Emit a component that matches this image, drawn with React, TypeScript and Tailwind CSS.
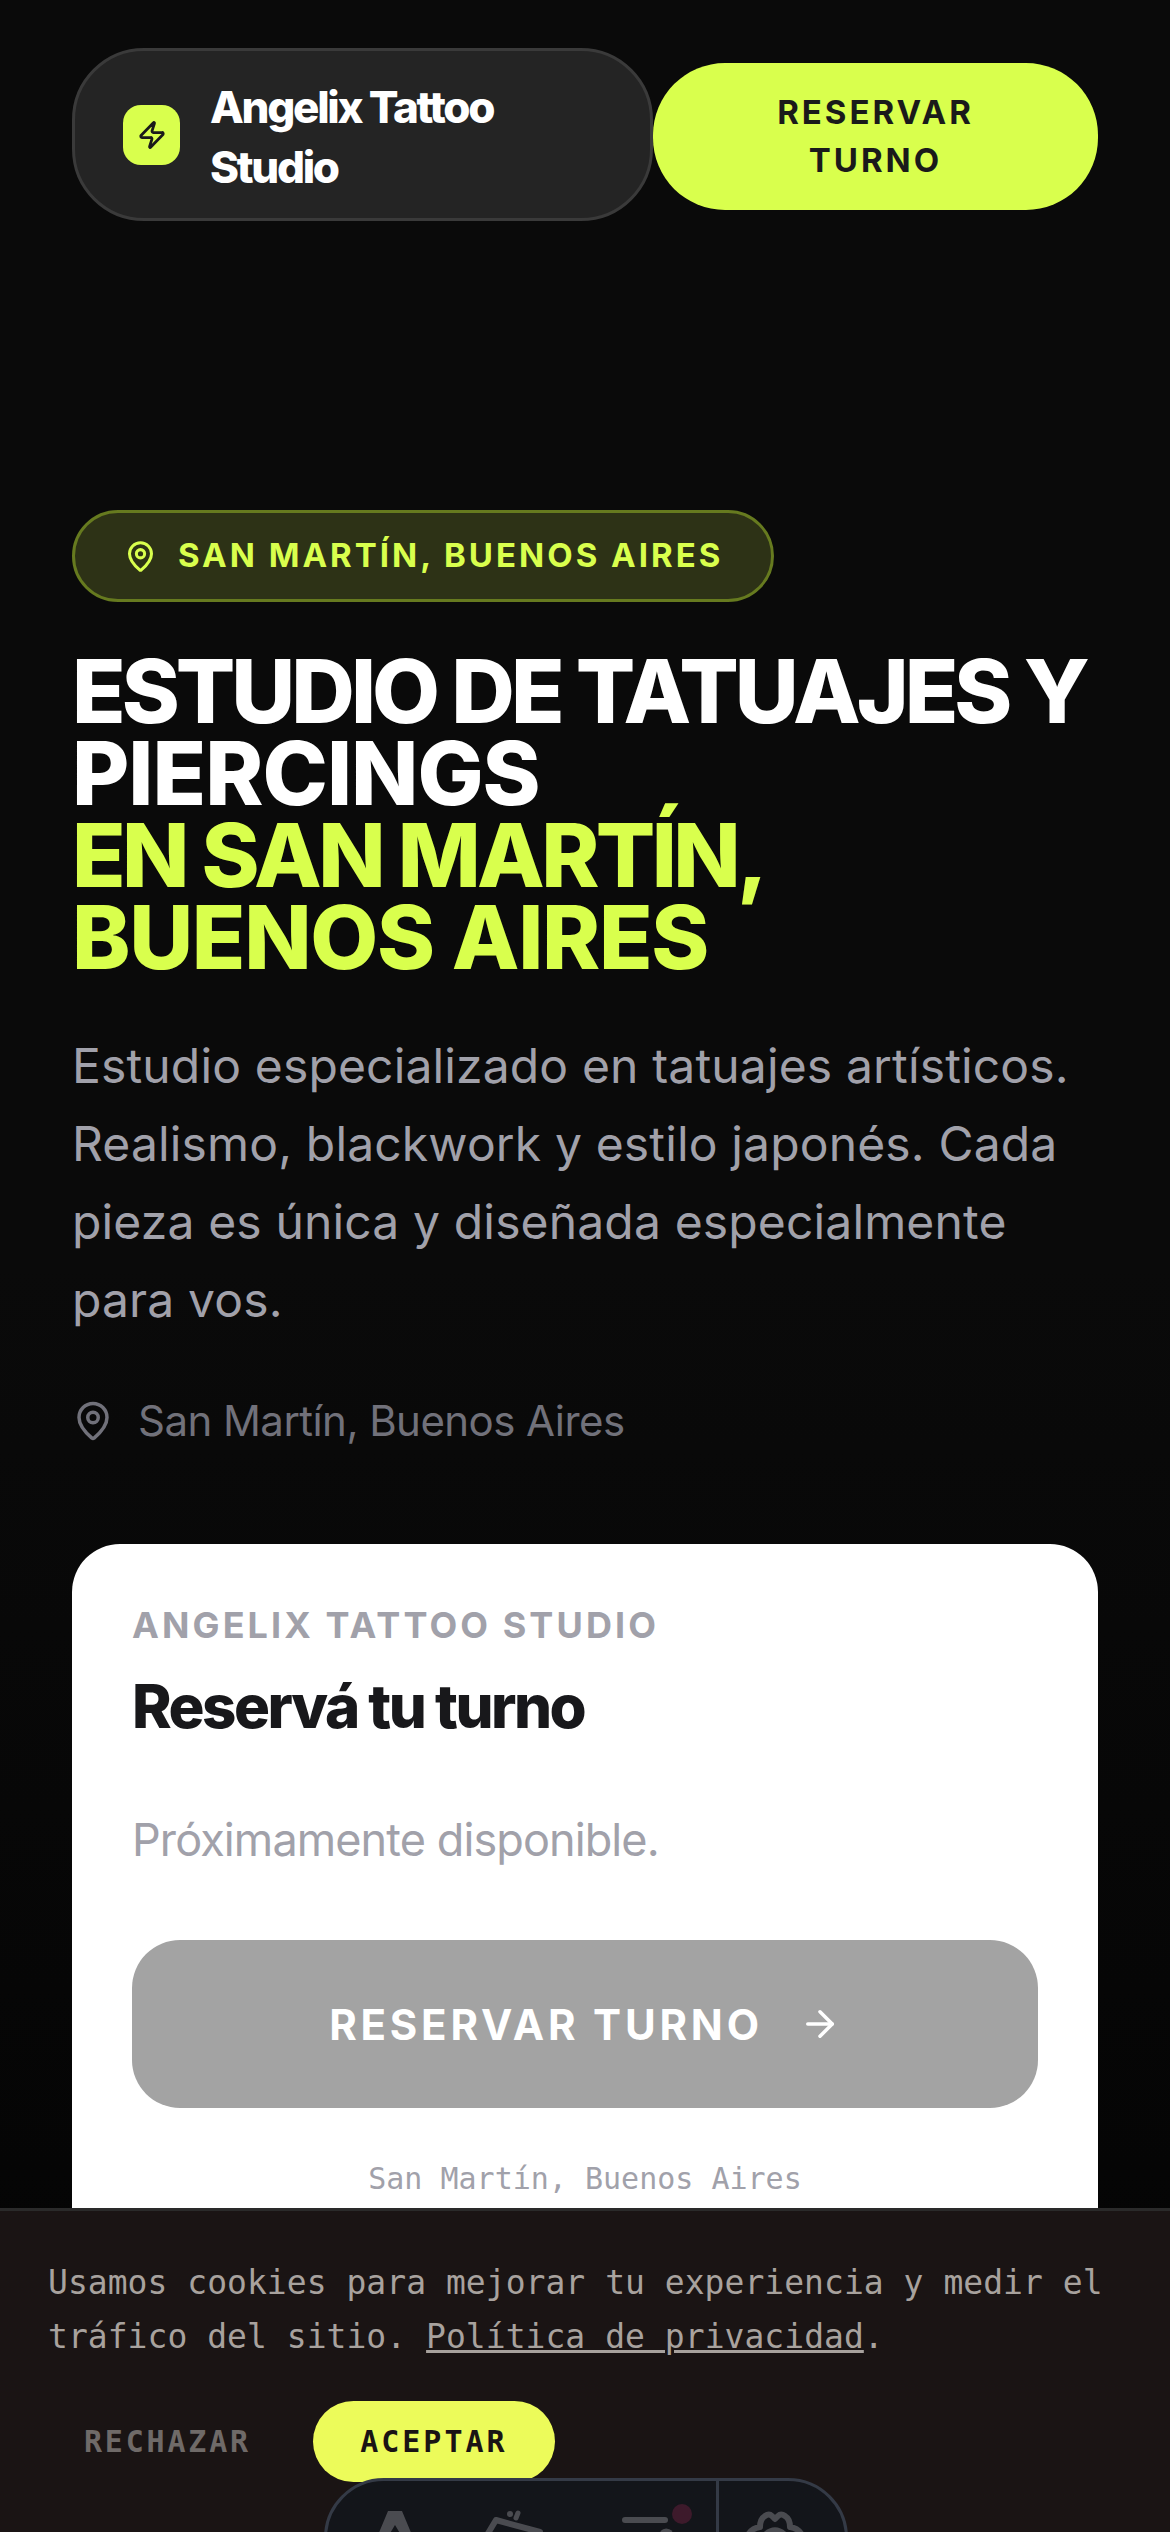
import { ArrowRight, MapPin, Zap } from "lucide-react";

const sans = "font-['Inter','Liberation_Sans',sans-serif]";
const mono = "font-['DejaVu_Sans_Mono','Liberation_Mono',monospace]";

const App = () => {
  return (
    <div className={`relative h-[2532px] w-[1170px] overflow-hidden bg-[linear-gradient(180deg,#0a0a0a_0%,#0a0a0a_50%,#030303_100%)] ${sans}`}>
      <header className="flex items-center px-[72px] pt-12">
        <div className="flex h-[173px] w-[581px] shrink-0 items-center gap-[30px] rounded-[72px] border-[3px] border-[#3a3a3a] bg-[#242424] pl-[48px]">
          <div className="flex h-[60px] w-[57px] items-center justify-center rounded-[18px] bg-[#d9ff4d]">
            <Zap size={30} strokeWidth={2.2} className="text-[#1a1a1a]" />
          </div>
          <div className="pt-[4px] text-[44px] leading-[60px] font-extrabold tracking-[-2.3px] text-white">
            Angelix Tattoo
            <br />
            Studio
          </div>
        </div>
        <button className="mt-[3px] flex h-[147px] flex-1 items-center justify-center rounded-[72px] bg-[#d9ff4d] text-center text-[33px] leading-[48px] font-bold tracking-[3px] text-[#1a1a1a]">
          RESERVAR
          <br />
          TURNO
        </button>
      </header>

      <main className="px-[72px] pt-[289px]">
        <div className="flex h-[92px] w-[702px] items-center gap-[21px] rounded-full border-[3px] border-[#667a1f] bg-[#2d3216] pl-[49px]">
          <MapPin size={33} strokeWidth={2.2} className="text-[#d9ff4d]" />
          <span className="text-[33px] font-bold tracking-[3px] text-[#d9ff4d]">SAN MARTÍN, BUENOS AIRES</span>
        </div>

        <h1 className="mt-[48px] text-[88px] leading-[82px] font-extrabold tracking-[-4px] text-white">
          <span className="block">ESTUDIO DE TATUAJES Y</span>
          <span className="block tracking-[-1px]">PIERCINGS</span>
          <span className="block tracking-[-3.6px] text-[#d9ff4d]">EN SAN MARTÍN,</span>
          <span className="block tracking-[-1.3px] text-[#d9ff4d]">BUENOS AIRES</span>
        </h1>

        <p className="mt-[49px] text-[48px] leading-[78px] tracking-[0.15px] text-[#a1a1aa]">
          Estudio especializado en tatuajes artísticos.
          <br />
          Realismo, blackwork y estilo japonés. Cada
          <br />
          pieza es única y diseñada especialmente
          <br />
          para vos.
        </p>

        <div className="mt-[52px] flex items-center gap-[24px] text-[#71717a]">
          <MapPin size={42} strokeWidth={2} />
          <span className="text-[42px] leading-[60px] tracking-[-0.55px]">San Martín, Buenos Aires</span>
        </div>

        <section className="mt-[93px] h-[900px] rounded-[48px] bg-white px-[60px] pt-[58px]">
          <div className="text-[36px] leading-[46px] font-bold tracking-[3.1px] text-[#a1a1aa]">ANGELIX TATTOO STUDIO</div>
          <h2 className="mt-[19px] text-[60px] leading-[78px] font-extrabold tracking-[-2.5px] text-[#18181b]">Reservá tu turno</h2>
          <p className="mt-[65px] text-[45px] leading-[60px] tracking-[-0.9px] text-[#a1a1aa]">Próximamente disponible.</p>
          <button className="mt-[70px] flex h-[168px] w-full items-center justify-center gap-[36px] rounded-[48px] bg-[#a3a3a3] text-[42px] font-bold tracking-[3.8px] text-white">
            RESERVAR TURNO
            <ArrowRight size={42} strokeWidth={2} />
          </button>
          <div className={`mt-[51px] text-center text-[30px] leading-[40px] text-[#a1a1aa] ${mono}`}>San Martín, Buenos Aires</div>
        </section>
      </main>

      {/* cookie bar */}
      <div className={`absolute inset-x-0 bottom-0 h-[324px] border-t-[3px] border-[#2a2a2a] bg-[#1a1414] px-[48px] pt-[45px] ${mono}`}>
        <p className="text-[33px] leading-[54px] tracking-[0.03px] text-[#a8a29e]">
          Usamos cookies para mejorar tu experiencia y medir el tráfico del sitio.{" "}
          <a className="underline">Política de privacidad</a>.
        </p>
        <div className="mt-[37px] flex items-center gap-[62px] pl-[36px]">
          <button className="text-[30px] font-bold tracking-[2.8px] text-[#6f6a68]">RECHAZAR</button>
          <button className="h-[81px] w-[242px] rounded-full bg-[#ecfb5a] text-[30px] font-bold tracking-[3px] text-[#1a1414]">ACEPTAR</button>
        </div>
      </div>

      {/* dev toolbar, cut off by the window */}
      <div className="absolute top-[2478px] left-[324px] flex h-[120px] w-[524px] rounded-[60px] border-[3px] border-[#343a46] bg-[#13151a]">
        <svg viewBox="0 0 389 54" className="h-[54px] w-[389px]" fill="none" stroke="#4a4b50">
          <path d="M51 54 L61 30 H75 L85 54 H74 L68 44 L62 54 Z" fill="#4a4b50" stroke="none" />
          <path d="M160 54 L169 39 L213 51" strokeWidth="6" strokeLinecap="round" strokeLinejoin="round" />
          <circle cx="183" cy="33" r="3" fill="#4a4b50" stroke="none" />
          <path d="M191 32 L189 37" strokeWidth="5" strokeLinecap="round" />
          <path d="M298 39 H338" strokeWidth="6" strokeLinecap="round" />
          <path d="M335 52 Q339 48 344 52" strokeWidth="5" />
          <circle cx="355" cy="33" r="10" fill="#3d1a2b" stroke="none" />
        </svg>
        <div className="h-full w-[3px] bg-[#343a46]" />
        <svg viewBox="0 0 126 54" className="h-[54px] w-[126px]" fill="none" stroke="#4a4b50" strokeWidth="6">
          <path d="M29 54 Q33 47 41 46 Q41 38 46 35 Q50 32 53 35 L56 38 L59 35 Q62 32 66 35 Q71 38 71 46 Q79 47 83 54" strokeLinejoin="round" />
          <path d="M46 54 Q56 45 66 54" />
        </svg>
      </div>
    </div>
  );
};

export default App;
